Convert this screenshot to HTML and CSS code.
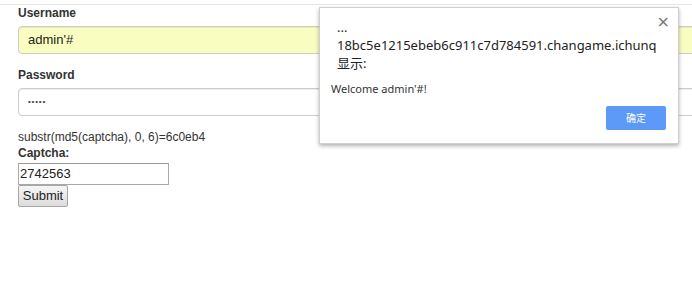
FILE: index.html
```html
<!DOCTYPE html>
<html>
<head>
<meta charset="utf-8">
<link rel="stylesheet" href="styles.css">
</head>
<body>
<div class="topline"></div>
<form class="form">
  <div class="group">
    <label class="label">Username</label>
    <div class="control filled">admin'#</div>
  </div>
  <div class="group">
    <label class="label">Password</label>
    <div class="control pw">•••••</div>
  </div>
  <div class="hint">substr(md5(captcha), 0, 6)=6c0eb4</div>
  <label class="label small">Captcha:</label>
  <div class="captcha">2742563</div>
  <div class="submit">Submit</div>
</form>

<div class="dialog">
  <span class="close">×</span>
  <div class="origin">
    <div class="dots">...</div>
    <div>18bc5e1215ebeb6c911c7d784591.changame.ichunq</div>
    <div>显示:</div>
  </div>
  <div class="msg">Welcome admin'#!</div>
  <div class="actions"><span class="ok">确定</span></div>
</div>
</body>
</html>
```
FILE: styles.css
```css
html, body {
  margin: 0;
  padding: 0;
  background: #fff;
  overflow: hidden;
  width: 692px;
  height: 284px;
  font-family: "Liberation Sans", Arial, sans-serif;
  color: #333;
}
.topline {
  height: 4px;
  border-bottom: 1px solid #e6e6e6;
}
.form {
  margin: 0;
  padding-left: 18px;
}
.group {
  margin-bottom: 13px;
}
.label {
  display: block;
  font-weight: bold;
  font-size: 12px;
  line-height: 17px;
  margin-bottom: 4px;
  color: #333;
}
.control {
  box-sizing: border-box;
  width: 700px;
  height: 28px;
  border: 1px solid #ccc;
  border-radius: 4px;
  padding: 0 9px;
  font-size: 13px;
  line-height: 26px;
  color: #555;
  box-shadow: inset 0 1px 1px rgba(0,0,0,.075);
}
.filled {
  background: #fafdc0;
  color: #222;
}
.pw {
  font-size: 8px;
  letter-spacing: 0.8px;
  color: #444;
}
.hint {
  font-size: 12px;
  line-height: 16px;
  margin-top: 11px;
  color: #333;
}
.label.small {
  margin-bottom: 2px;
  line-height: 16px;
}
.captcha {
  box-sizing: border-box;
  width: 151px;
  height: 22px;
  border: 1px solid #a9a9a9;
  border-top-color: #999;
  font-size: 13px;
  line-height: 20px;
  padding: 0 1px;
  color: #222;
}
.submit {
  box-sizing: border-box;
  display: block;
  width: 50px;
  height: 22px;
  border: 1px solid #a6a6a6;
  border-radius: 2px;
  background: linear-gradient(#f6f6f6, #dcdcdc);
  font-size: 13px;
  line-height: 20px;
  text-align: center;
  color: #222;
}
.dialog {
  position: absolute;
  left: 319px;
  top: 7px;
  width: 360px;
  height: 137px;
  box-sizing: border-box;
  background: #fff;
  border: 1px solid #cfcfcf;
  box-shadow: 0 2px 4px rgba(0,0,0,.3);
  padding: 10px 12px 0 11px;
}
.close {
  position: absolute;
  right: 8px;
  top: 4px;
  font-size: 16px;
  color: #777;
  font-family: "DejaVu Sans", sans-serif;
}
.origin {
  padding-left: 6px;
  font-family: "Noto Sans", "Noto Sans CJK SC", sans-serif;
  font-size: 13px;
  line-height: 18px;
  color: #222;
}
.origin .dots {
  line-height: 18px;
}
.msg {
  margin-top: 9px;
  font-family: "Noto Sans", "Noto Sans CJK SC", sans-serif;
  font-size: 11px;
  line-height: 15px;
  color: #333;
}
.actions {
  display: flex;
  justify-content: flex-end;
  margin-top: 10px;
}
.ok {
  display: inline-block;
  width: 60px;
  height: 24px;
  line-height: 24px;
  text-align: center;
  background: #5d9af7;
  color: #fff;
  font-family: "Noto Sans CJK SC", sans-serif;
  font-size: 10px;
  border-radius: 2px;
}
```
